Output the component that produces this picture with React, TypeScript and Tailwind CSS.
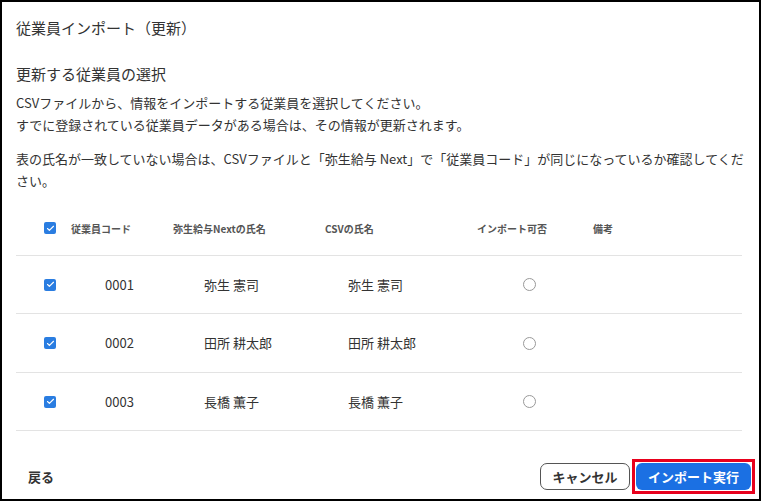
import { Check } from 'lucide-react'

const rows = [
  { code: '0001', name: '弥生 憲司', csv: '弥生 憲司', h: 'h-[58px]' },
  { code: '0002', name: '田所 耕太郎', csv: '田所 耕太郎', h: 'h-[59px]' },
  { code: '0003', name: '長橋 薫子', csv: '長橋 薫子', h: 'h-[58px]' },
]

const cols = 'grid grid-cols-[49px_102px_152px_152px_116px_1fr] items-center'

function CheckBox() {
  return (
    <span className="flex h-3 w-3 items-center justify-center rounded-[2px] bg-[#2a7de1]">
      <Check className="h-[9px] w-[9px] text-white" strokeWidth={3} />
    </span>
  )
}

export default function App() {
  return (
    <div
      className="flex h-[501px] w-[761px] flex-col border-2 border-black bg-white text-[#333]"
      style={{ fontFamily: '"Noto Sans CJK JP", "Noto Sans", sans-serif' }}
    >
      <div className="px-[14px] pt-[15px]">
        <h1 className="text-[15px] leading-[22px]">従業員インポート（更新）</h1>

        <h2 className="mt-6 text-[15px] leading-[22px]">更新する従業員の選択</h2>

        <div className="mt-[7px] text-[13px] leading-[22px]">
          <p>
            CSVファイルから、情報をインポートする従業員を選択してください。
            <br />
            すでに登録されている従業員データがある場合は、その情報が更新されます。
          </p>
          <p className="mr-[-10px] mt-3">
            表の氏名が一致していない場合は、CSVファイルと「弥生給与 Next」で「従業員コード」が同じになっているか確認してください。
          </p>
        </div>

        <div className="mt-[9px] w-[726px]">
          <div className={`${cols} h-[55px] border-b border-[#e3e3e3] text-[10px] font-bold text-[#555]`}>
            <div className="pl-[28px]">
              <CheckBox />
            </div>
            <div className="pl-[6px]">従業員コード</div>
            <div className="pl-[6px]">弥生給与Nextの氏名</div>
            <div className="pl-[6px]">CSVの氏名</div>
            <div className="pl-[6px]">インポート可否</div>
            <div className="pl-[6px]">備考</div>
          </div>

          {rows.map((r) => (
            <div
              key={r.code}
              className={`${cols} ${r.h} border-b border-[#e3e3e3] text-[13px]`}
            >
              <div className="pl-[28px]">
                <CheckBox />
              </div>
              <div className="pl-[40px]">{r.code}</div>
              <div className="pl-[37px]">{r.name}</div>
              <div className="pl-[29px]">{r.csv}</div>
              <div className="pl-[52px]">
                <span className="block h-[13px] w-[13px] rounded-full border border-[#999]" />
              </div>
              <div />
            </div>
          ))}
        </div>
      </div>

      <div className="mt-auto flex items-center justify-between pb-[5px] pl-[26px] pr-[4px]">
        <span className="text-[13px] font-bold">戻る</span>
        <div className="flex items-center gap-[2px]">
          <button className="h-[27px] w-[90px] rounded-[7px] border border-[#555] bg-white text-[13px] font-bold text-[#333]">
            キャンセル
          </button>
          <div className="border-[3px] border-[#e8001c] p-px">
            <button className="h-[27px] w-[115px] rounded-[6px] bg-[#1b70e3] text-[13px] font-bold text-white">
              インポート実行
            </button>
          </div>
        </div>
      </div>
    </div>
  )
}
